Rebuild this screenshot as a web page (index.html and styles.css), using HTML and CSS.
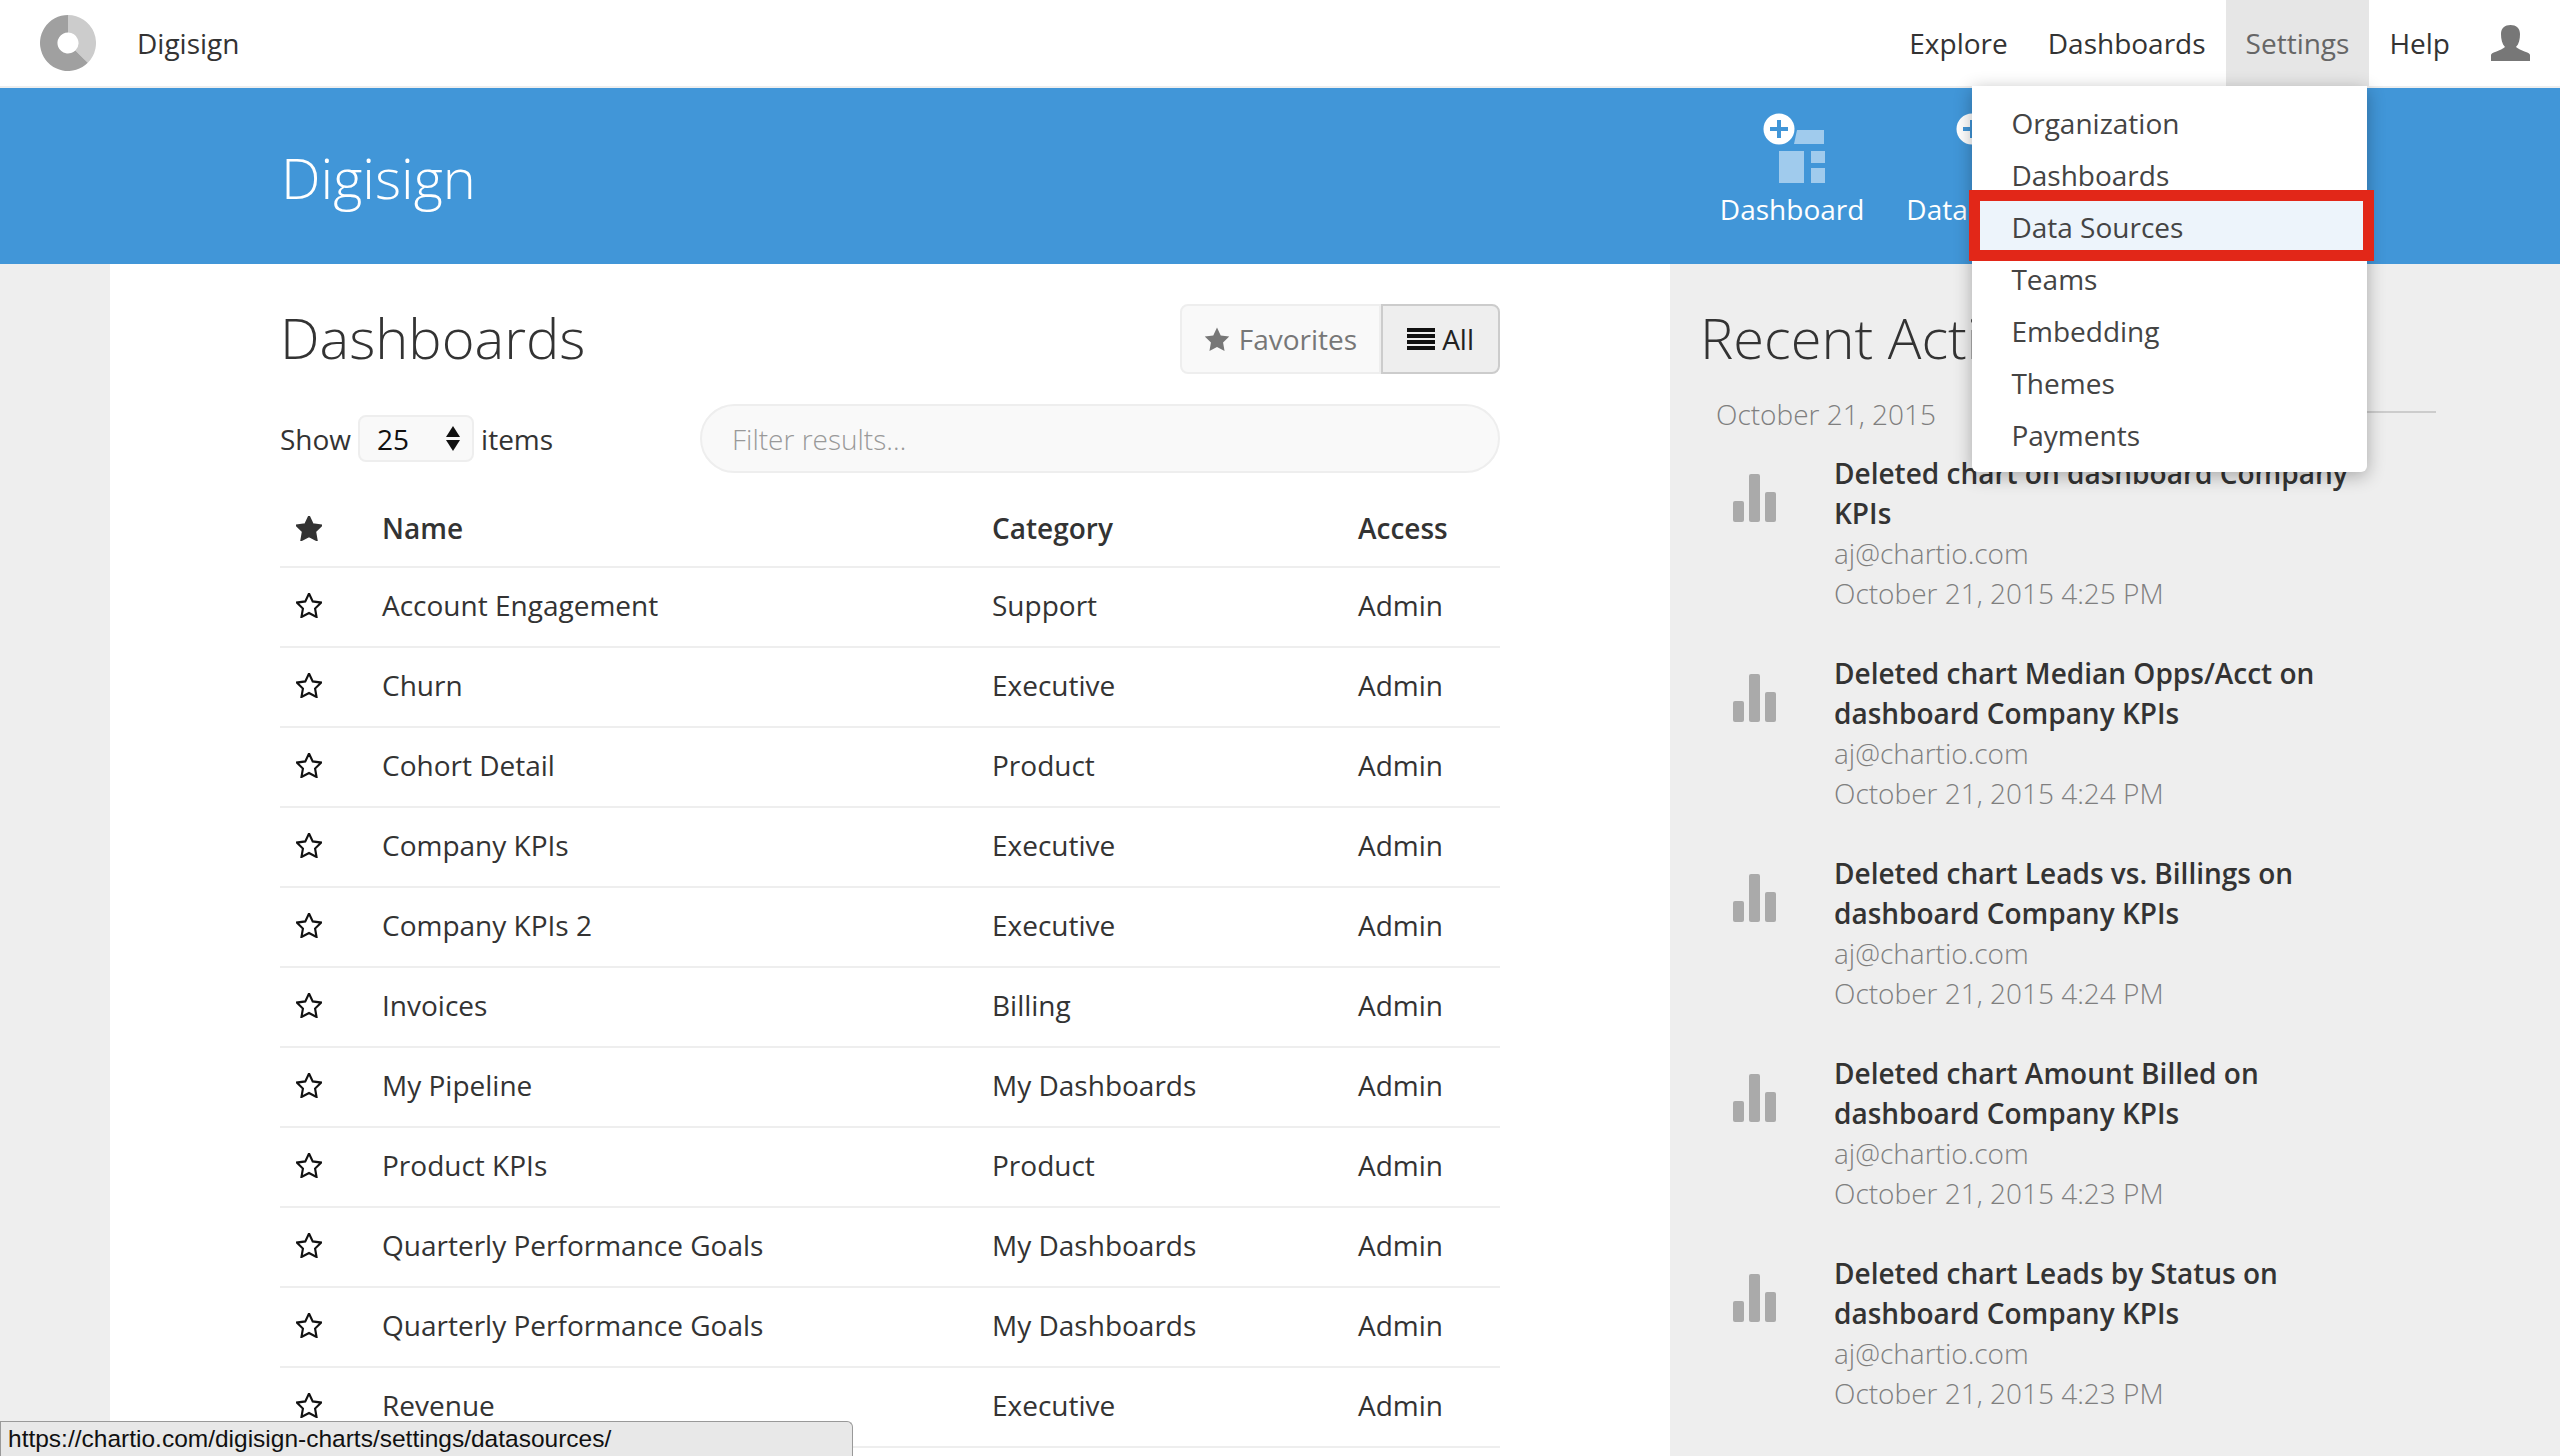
FILE: index.html
```html
<!DOCTYPE html>
<html lang="en">
<head>
    <meta charset="UTF-8">
    <title>Digisign</title>
    <link rel="stylesheet" href="styles.css">
</head>
<body>
    <svg class="defs" width="0" height="0">
        <symbol id="star" viewBox="1 1 24 23.5"><path d="M13 1.5l3.5 7.4 8 1.1-5.8 5.6 1.4 8L13 19.8l-7.1 3.8 1.4-8L1.5 10l8-1.1z"/></symbol>
        <symbol id="bars" viewBox="0 0 43 48"><rect x="0" y="27" width="11" height="21" rx="2"/><rect x="16" y="0" width="11" height="48" rx="2"/><rect x="32" y="18" width="11" height="30" rx="2"/></symbol>
        <symbol id="add-board" viewBox="0 0 62 70">
            <path fill="#a0cbed" d="M34 17H61V31H31Z"/>
            <rect fill="#a0cbed" x="16" y="38" width="25" height="32"/>
            <rect fill="#a0cbed" x="48" y="38" width="14" height="12"/>
            <rect fill="#a0cbed" x="48" y="55" width="14" height="15"/>
            <circle fill="#fff" cx="16" cy="16" r="15.5"/>
            <path fill="#4196d8" d="M14 7h4v7h7v4h-7v7h-4v-7H7v-4h7z"/>
        </symbol>
    </svg>

    <nav class="topnav">
        <svg class="logo" viewBox="0 0 56 56">
            <path fill="#ccc" d="M28 0A28 28 0 0 1 47.8 47.8L35.4 35.4A10.5 10.5 0 0 0 28 17.5Z"/>
            <path fill="#a0a0a0" d="M47.8 47.8A28 28 0 1 1 28 0V17.5A10.5 10.5 0 1 0 35.4 35.4Z"/>
        </svg>
        <span class="brand">Digisign</span>
        <ul class="nav-links">
            <li>Explore</li>
            <li>Dashboards</li>
            <li class="open">Settings
                <ul class="menu">
                    <li>Organization</li>
                    <li>Dashboards</li>
                    <li class="picked"><i class="red-box"></i><span>Data Sources</span></li>
                    <li>Teams</li>
                    <li>Embedding</li>
                    <li>Themes</li>
                    <li>Payments</li>
                </ul>
            </li>
            <li>Help</li>
        </ul>
        <svg class="user" viewBox="0 0 39 36"><path d="M0 36V30C0 27 10 26 14 22C11 19 10 14 10 9C10 3 14 0 19.5 0C25 0 29 3 29 9C29 14 28 19 25 22C29 26 39 27 39 30V36Z"/></svg>
    </nav>

    <header class="banner">
        <h1>Digisign</h1>
        <div class="actions">
            <div class="action">
                <svg class="action-icon"><use href="#add-board"/></svg>
                <span>Dashboard</span>
            </div>
            <div class="action">
                <svg class="action-icon"><use href="#add-board"/></svg>
                <span>Data Source</span>
            </div>
        </div>
    </header>

    <div class="page">
        <main class="main">
            <div class="title-row">
                <h2>Dashboards</h2>
                <div class="btn-group">
                    <button class="btn"><svg class="btn-star"><use href="#star"/></svg>Favorites</button>
                    <button class="btn active">
                        <span class="burger"><i></i><i></i><i></i><i></i></span>All
                    </button>
                </div>
            </div>
            <div class="filter-row">
                <div class="show">
                    Show
                    <span class="select">25<span class="arrows"><i class="up"></i><i class="down"></i></span></span>
                    items
                </div>
                <input class="filter" type="text" placeholder="Filter results…">
            </div>
            <table class="boards">
                <thead>
                    <tr>
                        <th class="star-col"><svg class="star solid"><use href="#star"/></svg></th>
                        <th class="name-col">Name</th>
                        <th class="cat-col">Category</th>
                        <th>Access</th>
                    </tr>
                </thead>
                <tbody>
                    <tr><td><svg class="star"><use href="#star"/></svg></td><td>Account Engagement</td><td>Support</td><td>Admin</td></tr>
                    <tr><td><svg class="star"><use href="#star"/></svg></td><td>Churn</td><td>Executive</td><td>Admin</td></tr>
                    <tr><td><svg class="star"><use href="#star"/></svg></td><td>Cohort Detail</td><td>Product</td><td>Admin</td></tr>
                    <tr><td><svg class="star"><use href="#star"/></svg></td><td>Company KPIs</td><td>Executive</td><td>Admin</td></tr>
                    <tr><td><svg class="star"><use href="#star"/></svg></td><td>Company KPIs 2</td><td>Executive</td><td>Admin</td></tr>
                    <tr><td><svg class="star"><use href="#star"/></svg></td><td>Invoices</td><td>Billing</td><td>Admin</td></tr>
                    <tr><td><svg class="star"><use href="#star"/></svg></td><td>My Pipeline</td><td>My Dashboards</td><td>Admin</td></tr>
                    <tr><td><svg class="star"><use href="#star"/></svg></td><td>Product KPIs</td><td>Product</td><td>Admin</td></tr>
                    <tr><td><svg class="star"><use href="#star"/></svg></td><td>Quarterly Performance Goals</td><td>My Dashboards</td><td>Admin</td></tr>
                    <tr><td><svg class="star"><use href="#star"/></svg></td><td>Quarterly Performance Goals</td><td>My Dashboards</td><td>Admin</td></tr>
                    <tr><td><svg class="star"><use href="#star"/></svg></td><td>Revenue</td><td>Executive</td><td>Admin</td></tr>
                </tbody>
            </table>
        </main>

        <aside class="side">
            <h2>Recent Activity</h2>
            <div class="day"><span>October 21, 2015</span></div>
            <div class="event">
                <svg class="event-icon"><use href="#bars"/></svg>
                <div class="event-text">
                    <b>Deleted chart on dashboard Company KPIs</b>
                    <p>aj@chartio.com</p>
                    <p>October 21, 2015 4:25 PM</p>
                </div>
            </div>
            <div class="event">
                <svg class="event-icon"><use href="#bars"/></svg>
                <div class="event-text">
                    <b>Deleted chart Median Opps/Acct on dashboard Company KPIs</b>
                    <p>aj@chartio.com</p>
                    <p>October 21, 2015 4:24 PM</p>
                </div>
            </div>
            <div class="event">
                <svg class="event-icon"><use href="#bars"/></svg>
                <div class="event-text">
                    <b>Deleted chart Leads vs. Billings on dashboard Company KPIs</b>
                    <p>aj@chartio.com</p>
                    <p>October 21, 2015 4:24 PM</p>
                </div>
            </div>
            <div class="event">
                <svg class="event-icon"><use href="#bars"/></svg>
                <div class="event-text">
                    <b>Deleted chart Amount Billed on dashboard Company KPIs</b>
                    <p>aj@chartio.com</p>
                    <p>October 21, 2015 4:23 PM</p>
                </div>
            </div>
            <div class="event">
                <svg class="event-icon"><use href="#bars"/></svg>
                <div class="event-text">
                    <b>Deleted chart Leads by Status on dashboard Company KPIs</b>
                    <p>aj@chartio.com</p>
                    <p>October 21, 2015 4:23 PM</p>
                </div>
            </div>
        </aside>
    </div>

    <div class="status">https://chartio.com/digisign-charts/settings/datasources/</div>
</body>
</html>
```

FILE: styles.css
```css
html, body {
    height: 100%;
    overflow: hidden;
}
body {
    margin: 0;
    font-family: "Open Sans", sans-serif;
    font-size: 28px;
    color: #333;
    background: #eee;
}
.defs {
    position: absolute;
}
ul {
    list-style: none;
    margin: 0;
    padding: 0;
}

/* top nav */
.topnav {
    display: flex;
    align-items: center;
    height: 86px;
    padding-left: 40px;
    background: #fff;
    border-bottom: 2px solid #eee;
}
.logo {
    width: 56px;
    height: 56px;
}
.brand {
    margin-left: 41px;
}
.nav-links {
    display: flex;
    margin-left: auto;
    height: 86px;
}
.nav-links > li {
    position: relative;
    padding: 0 20px;
    line-height: 86px;
}
.nav-links > li.open {
    background: #e6e6e6;
    color: #666;
}
.user {
    width: 39px;
    height: 36px;
    margin: 0 30px 0 21px;
    fill: #777;
}
.menu {
    position: absolute;
    top: 86px;
    right: 2px;
    z-index: 5;
    width: 395px;
    height: 386px;
    padding-top: 11px;
    box-sizing: border-box;
    background: #fff;
    border-radius: 0 0 6px 6px;
    box-shadow: 0 4px 18px rgba(0, 0, 0, 0.3);
    color: #444;
}
.menu li {
    position: relative;
    height: 52px;
    padding-left: 39px;
    line-height: 52px;
}
.menu span {
    position: relative;
}
/* red annotation round the picked item */
.red-box {
    position: absolute;
    top: -11px;
    left: -3px;
    width: 383px;
    height: 49px;
    border: 11px solid #e22718;
    background: #edf4fb;
}

/* blue banner */
.banner {
    display: flex;
    height: 176px;
    padding-left: 281px;
    background: #4196d8;
    color: #fff;
}
h1 {
    margin: 0;
    font-size: 56px;
    font-weight: 300;
    line-height: 178px;
}
.actions {
    display: flex;
    margin-left: auto;
    margin-right: 495px;
    gap: 42px;
}
.action {
    display: flex;
    flex-direction: column;
    align-items: center;
    padding-top: 25px;
}
.action-icon {
    width: 62px;
    height: 70px;
    margin: 0 0 7px 3px;
}

/* page columns */
.page {
    display: flex;
    padding-left: 110px;
    height: 1192px;
}
.main {
    width: 1220px;
    padding: 0 170px;
    background: #fff;
}
h2 {
    margin: 0 0 4px;
    font-size: 56px;
    font-weight: 300;
    line-height: 72px;
}
.title-row {
    display: flex;
    justify-content: space-between;
    align-items: center;
    padding-top: 37px;
}
.btn-group {
    display: flex;
}
.btn {
    display: flex;
    align-items: center;
    height: 70px;
    padding: 0 22px;
    font: inherit;
    color: #777;
    background: #f9f9f9;
    border: 2px solid #eee;
    border-radius: 8px 0 0 8px;
}
.btn.active {
    padding: 0 24px 0 24px;
    color: #222;
    background: #eee;
    border: 2px solid #ccc;
    border-radius: 0 8px 8px 0;
}
.btn-star {
    width: 26px;
    height: 25px;
    margin-right: 9px;
    fill: #777;
}
.burger {
    display: flex;
    flex-direction: column;
    justify-content: space-between;
    width: 28px;
    height: 22px;
    margin-right: 7px;
}
.burger i {
    height: 4px;
    background: #111;
}
.filter-row {
    display: flex;
    justify-content: space-between;
    align-items: center;
    margin-top: 27px;
}
.show {
    display: flex;
    align-items: center;
    gap: 7px;
}
.select {
    display: flex;
    align-items: center;
    justify-content: space-between;
    width: 116px;
    height: 47px;
    box-sizing: border-box;
    padding: 0 12px 0 17px;
    color: #111;
    background: #f9f9f9;
    border: 2px solid #eee;
    border-radius: 8px;
}
.arrows i {
    display: block;
    width: 0;
    border-left: 7px solid transparent;
    border-right: 7px solid transparent;
}
.arrows .up {
    border-bottom: 11px solid #111;
    margin-bottom: 3px;
}
.arrows .down {
    border-top: 11px solid #111;
}
.filter {
    width: 800px;
    height: 69px;
    box-sizing: border-box;
    padding: 0 30px;
    font: inherit;
    font-weight: 300;
    background: #f9f9f9;
    border: 2px solid #eee;
    border-radius: 35px;
    outline: none;
}
.filter::placeholder {
    color: #999;
}

/* dashboards table */
.boards {
    width: 1220px;
    margin-top: 15px;
    table-layout: fixed;
    border-collapse: collapse;
}
.boards td, .boards th {
    height: 74px;
    padding: 0 0 4px;
    text-align: left;
    border-bottom: 2px solid #eee;
}
.boards th {
    height: 76px;
    padding: 2px 0 0;
    font-weight: 600;
}
.star-col {
    width: 102px;
}
.name-col {
    width: 610px;
}
.cat-col {
    width: 366px;
}
.star {
    display: block;
    width: 26px;
    height: 25px;
    margin-left: 16px;
    fill: none;
    stroke: #111;
    stroke-width: 2;
}
.star.solid {
    fill: #333;
    stroke: #333;
}

/* recent activity */
.side {
    flex: 1;
    padding-left: 30px;
    padding-top: 37px;
}
.day {
    width: 736px;
    box-sizing: border-box;
    margin-top: 21px;
    padding-left: 16px;
    color: #7f7f7f;
    font-weight: 300;
    line-height: 40px;
    background: linear-gradient(#ccc, #ccc) no-repeat 300px 17px / 100% 2px;
}
.event {
    display: flex;
    width: 700px;
    height: 200px;
}
.day + .event {
    margin-top: 19px;
}
.event-icon {
    width: 43px;
    height: 48px;
    margin: 21px 58px 0 33px;
    fill: #aaa;
}
.event-text {
    width: 540px;
    line-height: 40px;
}
.event-text b {
    font-weight: 600;
}
.event-text p {
    margin: 0;
    color: #7f7f7f;
    font-weight: 300;
}

/* browser link preview */
.status {
    position: absolute;
    left: 0;
    bottom: 0;
    z-index: 6;
    width: 844px;
    height: 34px;
    padding-left: 7px;
    font-family: "Liberation Sans", Arial, sans-serif;
    font-size: 24.5px;
    line-height: 34px;
    color: #111;
    background: #e8e8e8;
    border: 1px solid #999;
    border-bottom: 0;
    border-radius: 0 6px 0 0;
}
```
